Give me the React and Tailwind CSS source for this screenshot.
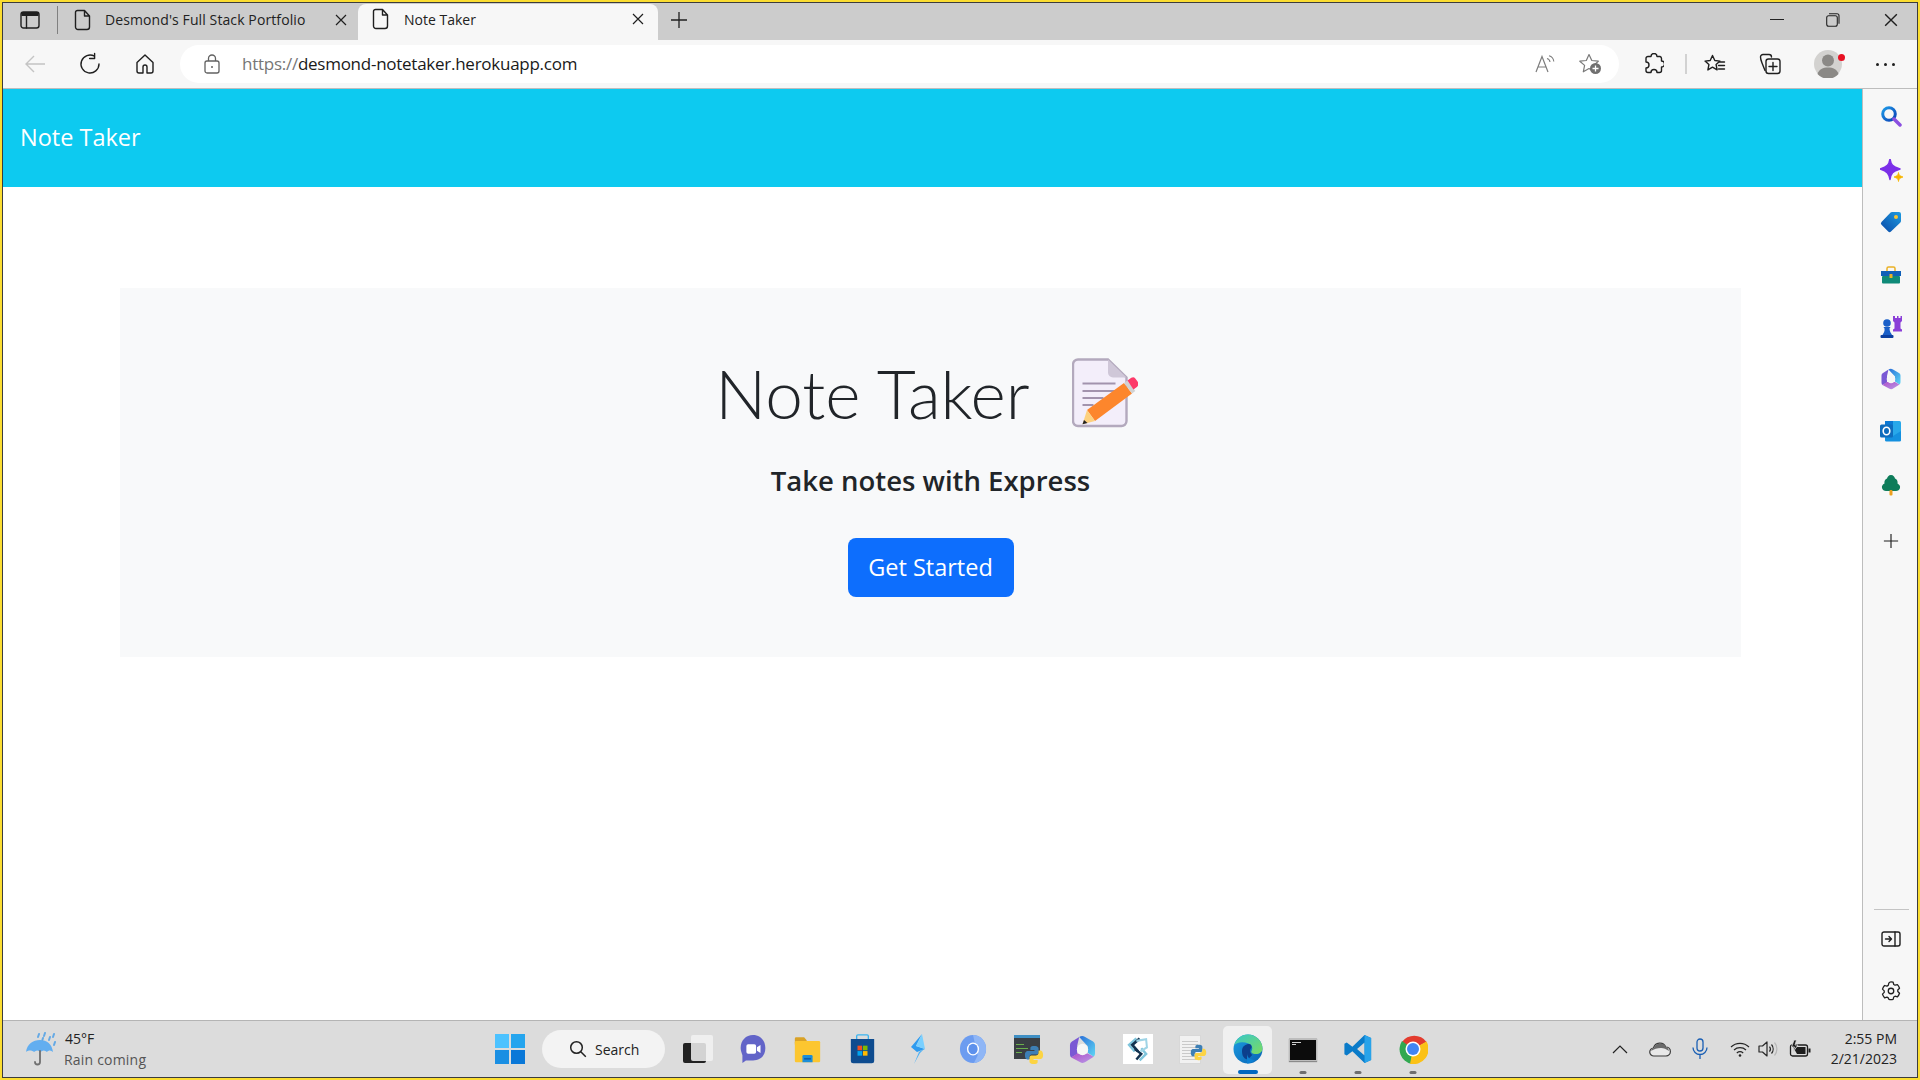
import React from "react";

const S = ({ w = 24, h = 24, vb = "0 0 24 24", children, className = "" }) => (
  <svg width={w} height={h} viewBox={vb} fill="none" className={className}>{children}</svg>
);
const Ln = { stroke: "#1f1f1f", strokeWidth: 1.4, strokeLinecap: "round", strokeLinejoin: "round" };

const Doc = () => (
  <S w={18} h={22} vb="0 0 18 22"><path d="M3.500 1.500h7l5 5.500v11a2.500 2.500 0 0 1-2.500 2.500H4A2.500 2.500 0 0 1 1.500 18V3.500a2 2 0 0 1 2-2zM10.500 1.500V7h5" {...Ln} /></S>
);
const X = ({ s = 12, c = "#1f1f1f" }) => (
  <S w={s} h={s} vb="0 0 12 12"><path d="M1 1l10 10M11 1L1 11" stroke={c} strokeWidth="1.2" /></S>
);
const TabsIcon = () => (
  <S w={20} h={20} vb="0 0 20 20"><rect x="1" y="2" width="18" height="16" rx="2.500" {...Ln} /><path d="M1.500 3.500a1.500 1.500 0 0 1 1.500-1.500h14a1.500 1.500 0 0 1 1.500 1.500V6h-17z" fill="#1f1f1f" /><path d="M6.500 6v12" {...Ln} /></S>
);
const Plus = ({ s = 18 }) => (
  <S w={s} h={s} vb="0 0 18 18"><path d="M9 1v16M1 9h16" stroke="#1f1f1f" strokeWidth="1.3" /></S>
);
const Back = () => (
  <S w={22} h={20} vb="0 0 22 20"><path d="M21 10H2M10 2l-8 8 8 8" stroke="#c4c4c4" strokeWidth="1.4" /></S>
);
const Reload = () => (
  <S w={22} h={24} vb="0 0 22 24"><path d="M15.500 4.200A9 9 0 1 0 20 12M15.600 1.500v5h-5" {...Ln} /></S>
);
const Home = () => (
  <S w={20} h={22} vb="0 0 20 22"><path d="M8 20H4a2 2 0 0 1-2-2V9.500L10 2l8 7.500V18a2 2 0 0 1-2 2h-4v-6a2 2 0 0 0-4 0z" {...Ln} /></S>
);
const Lock = () => (
  <S w={16} h={20} vb="0 0 16 20"><rect x="1" y="7" width="14" height="12" rx="2" stroke="#616161" strokeWidth="1.3" /><path d="M4.500 7V4.500a3.500 3.500 0 0 1 7 0V7" stroke="#616161" strokeWidth="1.3" /><circle cx="8" cy="13" r="1" fill="#616161" /></S>
);
const ReadAloud = () => (
  <S w={20} h={18} vb="0 0 20 18"><path d="M1 17L7 1.500 13 17M3 12h8" stroke="#7d7d7d" strokeWidth="1.200" /><path d="M12 3.500c1.700.5 2.800 1.800 3 3.500M14 .8c2.700.7 4.500 3 4.800 5.700" stroke="#7d7d7d" strokeWidth="1.100" /></S>
);
const FavAdd = () => (
  <S w={24} h={22} vb="0 0 24 22"><path d="M11 1.500l2.800 6 6.500.7-4.800 4.400 1.300 6.400L11 15.500 5.300 18.800l1.300-6.400L1.800 8.200l6.500-.7z" stroke="#7a7a7a" strokeWidth="1.2" strokeLinejoin="round" /><circle cx="17.500" cy="15.500" r="5.500" fill="#707070" /><path d="M17.500 12.500v6M14.500 15.500h6" stroke="#fff" strokeWidth="1.300" /></S>
);
const Puzzle = () => (
  <S w={20} h={22} vb="0 0 20 22"><path d="M7 3.500a3 3 0 0 1 6 0h3a2 2 0 0 1 1.500 2v2.500a3 3 0 0 1 0 6V17.500a2 2 0 0 1-2 2H13a3 3 0 0 0-6 0H4a2 2 0 0 1-2-2V15a3 3 0 0 0 0-6V5.500a2 2 0 0 1 2-2z" {...Ln} /></S>
);
const Favs = () => (
  <S w={22} h={20} vb="0 0 22 20"><path d="M8.500 1.500l2.300 5 5.200.6-3.900 3.500 1 5.300-4.600-2.700-4.600 2.700 1-5.300L1 7.100l5.200-.6z" {...Ln} /><path d="M15.500 8h5M14.500 11.500h6M14.500 15h6" {...Ln} /></S>
);
const Collections = () => (
  <S w={22} h={22} vb="0 0 22 22"><path d="M6 17.500L3 10C2 7.500 1.500 5.500 1.500 4A2.500 2.500 0 0 1 4 1.500h6A2.500 2.500 0 0 1 12.500 4" {...Ln} /><rect x="7" y="6" width="14" height="14.500" rx="2.500" {...Ln} /><path d="M14 9.500v8M10 13.500h8" {...Ln} /></S>
);
const Avatar = () => (
  <div className="relative w-[28px] h-[28px] rounded-full bg-[#d3d2d0]">
    <S w={28} h={28} vb="0 0 28 28"><circle cx="14" cy="10.500" r="6" fill="#8b8986" /><path d="M3.500 24c1.500-5 5.500-6.500 10.500-6.500S23 19 24.500 24a14 14 0 0 1-21 0z" fill="#8b8986" /></S>
    <span className="absolute -right-[3px] top-[4px] w-[7px] h-[7px] rounded-full bg-[#e81123]" />
  </div>
);
const Dots = () => (
  <div className="flex gap-[5px]">
    <span className="w-[3px] h-[3px] rounded-full bg-[#1f1f1f]" />
    <span className="w-[3px] h-[3px] rounded-full bg-[#1f1f1f]" />
    <span className="w-[3px] h-[3px] rounded-full bg-[#1f1f1f]" />
  </div>
);

/* sidebar icons */
const SearchC = () => (
  <S w={22} h={22} vb="0 0 22 22"><defs><linearGradient id="sg" x1="0" y1="0" x2="1" y2="1"><stop offset="0" stopColor="#1d9be8" /><stop offset="1" stopColor="#0b3fb5" /></linearGradient></defs><circle cx="9" cy="9" r="6.300" stroke="url(#sg)" strokeWidth="3" /><path d="M14 14l6 6" stroke="#8b4fe0" strokeWidth="3.500" strokeLinecap="round" /></S>
);
const Spark = () => (
  <S w={24} h={24} vb="0 0 24 24"><path d="M10 0c1 6 2.500 7.500 10 10-7.500 2.500-9 4-10 10.500C9 14.500 7.500 12.500 0 10c7.500-2.500 9-4 10-10z" fill="#7b2fe8" stroke="#7b2fe8" strokeWidth="1.500" strokeLinejoin="round" /><path d="M18.500 13.500c.4 2.500 1 3.200 4.500 4.500-3.500 1.300-4.100 2-4.500 4.500-.4-2.500-1-3.200-4.500-4.500 3.500-1.300 4.100-2 4.500-4.500z" fill="#f7b500" stroke="#f7b500" strokeWidth=".8" strokeLinejoin="round" /></S>
);
const Tag = () => (
  <S w={22} h={22} vb="0 0 22 22"><defs><linearGradient id="tg" x1="0" y1="1" x2="1" y2="0"><stop offset="0" stopColor="#0a49a8" /><stop offset="1" stopColor="#1e9be0" /></linearGradient></defs><path d="M12 1h7a2 2 0 0 1 2 2v7a2 2 0 0 1-.6 1.400L11 20.500a2 2 0 0 1-2.800 0L1.500 13.800a2 2 0 0 1 0-2.800L10.600 1.600A2 2 0 0 1 12 1z" fill="url(#tg)" /><circle cx="16" cy="6" r="2" fill="#f9c531" /></S>
);
const Case = () => (
  <S w={22} h={18} vb="0 0 22 18"><path d="M7 5V2.500A1.500 1.500 0 0 1 8.500 1h5A1.500 1.500 0 0 1 15 2.500V5" stroke="#eab126" strokeWidth="1.500" /><rect x="1" y="5" width="20" height="5" fill="#0f5fb8" /><rect x="2" y="10" width="18" height="7.500" rx="1" fill="#0f8a78" /><rect x="9.500" y="8" width="3" height="4" rx=".6" fill="#eab126" /></S>
);
const Chess = () => (
  <S w={24} h={24} vb="0 0 24 24"><path d="M14 1h2v2h2V1h1.500v2h2V1H23v5l-1.500 1.500v6l1.500 1v2h-9v-2l1.500-1v-6L14 6z" fill="#8b3fd8" /><circle cx="8" cy="8" r="3.800" fill="#1a5fc8" /><path d="M4.500 12h7l-1 1.500c0 3 1.500 4.500 2.500 6.500H3.500c1-2 2.500-3.500 2-6.500z" fill="#1a5fc8" /><rect x="1.500" y="20" width="13" height="3" rx="1" fill="#0c3fa0" /></S>
);
const M365 = ({ s = 22, id = "a" }) => (
  <S w={s} h={s} vb="0 0 22 22">
    <defs>
      <linearGradient id={`mb${id}`} x1="0" y1="0" x2="1" y2="1"><stop offset="0" stopColor="#2a6fd8" /><stop offset="1" stopColor="#5fd6f5" /></linearGradient>
      <linearGradient id={`mp${id}`} x1="0" y1="0" x2="1" y2="1"><stop offset="0" stopColor="#b04fc8" /><stop offset="1" stopColor="#b79be8" /></linearGradient>
    </defs>
    <path d="M8.500 1.500a4 4 0 0 1 4.500 0l6 3.500a3 3 0 0 1 1.500 2.700v6.600a3 3 0 0 1-1 2.200L15 13.500V8.500z" fill={`url(#mb${id})`} />
    <path d="M1.500 7.500a3 3 0 0 1 1.500-2.600L8.500 1.500 7 8v6.500L2.500 17a3 3 0 0 1-1-2.300z" fill="#7a58d4" />
    <path d="M2.500 17L7 14l8 0 4.500 2.500-6 3.800a4 4 0 0 1-4.500.2z" fill={`url(#mp${id})`} />
    <circle cx="11" cy="11" r="4.300" fill="#f6f6f6" />
  </S>
);
const Outlook = () => (
  <S w={22} h={22} vb="0 0 22 22"><rect x="5" y="1" width="16" height="20" rx="1.500" fill="#28a8ea" /><rect x="5" y="1" width="8" height="7" fill="#0a78d4" /><path d="M5 11l8 5 8-5v9a1.500 1.500 0 0 1-1.500 1.500h-13A1.500 1.500 0 0 1 5 20z" fill="#1490df" /><rect x="0" y="4.500" width="13" height="13" rx="1.500" fill="#0f6cbd" /><ellipse cx="6.500" cy="11" rx="3.300" ry="3.800" stroke="#fff" strokeWidth="1.600" /></S>
);
const Tree = () => (
  <S w={20} h={22} vb="0 0 20 22"><path d="M10 1c2.500 0 3.500 2 4 3.500 2 .5 3 3 2.500 5 2 1 3 3 2.500 4.500-.5 2-2 3-4 3H5c-2 0-3.500-1-4-3-.4-2 .5-3.500 2.500-4.500C3 7.500 4 5 6 4.500 6.500 3 7.500 1 10 1z" fill="#0e7c5a" /><rect x="8.500" y="16" width="3" height="5.500" rx="1" fill="#eda01e" /></S>
);
const Dock = () => (
  <S w={20} h={16} vb="0 0 20 16"><rect x="1" y="1" width="18" height="14" rx="2" {...Ln} /><path d="M14 1v14M4.500 8h6M8 5.500L10.500 8 8 10.500" {...Ln} /></S>
);
const Gear = () => (
  <S w={22} h={22} vb="0 0 24 24"><circle cx="12" cy="12" r="3" {...Ln} /><path d="M12 2c.8 0 1.600.1 2.300.3l.7 2.600 1.400.8 2.600-.7c1 1.100 1.800 2.500 2.300 4l-1.900 1.900v1.600l1.900 1.900c-.5 1.500-1.300 2.900-2.300 4l-2.600-.7-1.400.8-.7 2.600a10 10 0 0 1-4.600 0L9 19.500l-1.400-.8-2.600.7a10 10 0 0 1-2.300-4l1.900-1.900v-1.600L2.700 10c.5-1.500 1.300-2.900 2.300-4l2.600.7L9 5.900l.7-2.600C10.400 2.100 11.200 2 12 2z" {...Ln} /></S>
);

/* hero illustration */
const NoteIcon = () => (
  <S w={66} h={70} vb="0 0 66 70">
    <path d="M6 1.500h30l18.500 18V63a5 5 0 0 1-5 5H6a5 5 0 0 1-5-5V6.500a5 5 0 0 1 5-5z" fill="#f3eefa" stroke="#b3a9bd" strokeWidth="2.400" />
    <path d="M36 1.500l18.500 18H41a5 5 0 0 1-5-5z" fill="#cfc7d8" />
    <path d="M10.500 25.500h33M10.500 33h33M10.500 40h21M10.500 47h11" stroke="#a293ad" strokeWidth="2.200" />
    <path d="M15 52L52 25l8 10.500L23 63z" fill="#fd862c" />
    <path d="M15 52l8 11-12.500 3.300z" fill="#fdd17e" />
    <path d="M12 62l-1.500 4.300 5-1.300z" fill="#222" />
    <path d="M52 25l3.300-2.400 8 10.500L60 35.500z" fill="#d2d2d2" />
    <path d="M55.500 22.500l3.800-2.700a3 3 0 0 1 4 .6l1.500 2.100 .6.800 .4.600a4 4 0 0 1-.9 5l-3.500 2.600z" fill="#fd3a69" />
  </S>
);

/* taskbar */
const Umbrella = () => (
  <S w={32} h={34} vb="0 0 32 34">
    <path d="M1 20C2 12 8 8 15 8s12 4 13 12c-2-2-4.500-2-6 0-2-2-4.500-2-6.500 0-2-2-4.500-2-6.500 0-2-2-6-2-8 0z" fill="#62aef0" />
    <path d="M15 19v11a2.500 2.500 0 0 1-5 0" stroke="#6f6f6f" strokeWidth="1.800" strokeLinecap="round" />
    <path d="M14 2l-1 3M20 1l-1 3M25 5l-1 3M29 2l-1 3M30 10l-1 3M18 6l-.6 2" stroke="#64a9e5" strokeWidth="2" strokeLinecap="round" />
  </S>
);
const Win = () => (
  <div className="grid grid-cols-2 gap-[1.500px] w-[30px] h-[30px]">
    <span className="bg-[#4cc2ff]" /><span className="bg-[#25a5ee]" /><span className="bg-[#1a8fe3]" /><span className="bg-[#0a78d8]" />
  </div>
);
const TaskView = () => (
  <div className="relative w-[30px] h-[28px]">
    <span className="absolute left-0 bottom-0 w-[23px] h-[20px] rounded-[2px] bg-[#222]" />
    <span className="absolute right-0 top-0 w-[22px] h-[26px] rounded-[2px] bg-[#f2f2f2]/85" />
  </div>
);
const Teams = () => (
  <S w={30} h={30} vb="0 0 30 34"><path d="M15 1c8 0 14 6 14 15s-6 14-14 14H7l-4 3v-9C2 21 1 19 1 16 1 7 7 1 15 1z" fill="#6264c8" /><rect x="7.500" y="11.500" width="11" height="11" rx="2" fill="#fff" /><path d="M19.500 15l4-2.500v9l-4-2.500z" fill="#fff" /></S>
);
const Folder = () => (
  <S w={31} h={27} vb="0 0 32 32"><path d="M1 3a1.500 1.500 0 0 1 1.500-1.500H12l3 3.500v5H1z" fill="#d9a227" /><rect x="1" y="6" width="30" height="25" rx="1.500" fill="#fcc630" /><path d="M10 31v-7a1.500 1.500 0 0 1 1.500-1.500h9A1.500 1.500 0 0 1 22 24v7z" fill="#1d8ed8" /><rect x="12" y="26" width="8" height="2" fill="#0b5cad" /></S>
);
const Store = () => (
  <S w={29} h={30} vb="0 0 30 36"><path d="M8 8V2.500A1.500 1.500 0 0 1 9.500 1h11A1.500 1.500 0 0 1 22 2.500V8" stroke="#3ab4f0" strokeWidth="1.600" /><path d="M1 6h28v26a3 3 0 0 1-3 3H4a3 3 0 0 1-3-3z" fill="#0e4c8f" /><rect x="9" y="14" width="5.500" height="5.500" fill="#f25022" /><rect x="15.500" y="14" width="5.500" height="5.500" fill="#7fba00" /><rect x="9" y="20.500" width="5.500" height="5.500" fill="#00a4ef" /><rect x="15.500" y="20.500" width="5.500" height="5.500" fill="#ffb900" /></S>
);
const Bolt = () => (
  <S w={16} h={30} vb="0 0 16 30"><path d="M12 0L1 13l6 5 8-3-9-3z" fill="#2e9bf0" /><path d="M15 14l-5 5-6 11 5-12z" fill="#4db0f5" /><path d="M12 0L6 12l9 3z" fill="#7ad0ff" /></S>
);
const Chromium = () => (
  <S w={28} h={28} vb="0 0 30 30"><ellipse cx="15" cy="15" rx="14" ry="15" fill="#6c9cf0" /><path d="M15 0c8 0 14 6.500 14 15 0 8-6 15-13 15l4-8z" fill="#8fb6f6" /><ellipse cx="15" cy="15" rx="6.500" ry="7" fill="#fff" /><ellipse cx="15" cy="15" rx="5" ry="5.500" fill="#5d91ec" /></S>
);
const Py = ({ s = 22 }) => (
  <S w={s} h={s} vb="0 0 22 22"><path d="M11 1C7 1 7 3 7 3v2.500h4.500v1H4.500S1 6 1 11s3 5 3 5h2v-2.500S6 10.500 9 10.500h4.500s2.500 0 2.500-2.500V3.500S16 1 11 1z" fill="#3d7fb5" /><path d="M11 21c4 0 4-2 4-2v-2.500h-4.500v-1h7s3.500.5 3.500-4.500-3-5-3-5h-2v2.500s0 3-3 3H8.500S6 11.500 6 14v4.500S6 21 11 21z" fill="#fcd443" /></S>
);
const PyEditor = () => (
  <div className="relative w-[28px] h-[28px]">
    <div className="w-[26px] h-[24px] bg-[#3a3f44] border-t-[3px] border-[#3f8fc4]">
      <div className="w-[8px] h-[1px] bg-[#6ab04c] mt-[6px] ml-[2px]" />
      <div className="w-[12px] h-[1px] bg-[#6ab04c] mt-[3px] ml-[2px]" />
      <div className="w-[6px] h-[1px] bg-[#6ab04c] mt-[3px] ml-[2px]" />
    </div>
    <div className="absolute right-[-2px] bottom-[-2px]"><Py s={20} /></div>
  </div>
);
const Chain = () => (
  <div className="w-[30px] h-[30px] bg-white flex items-center justify-center">
    <S w={26} h={26} vb="0 0 28 32"><path d="M12 3L3 11l7 8M16 30l8-8-6-7" stroke="#7fc5dc" strokeWidth="3" /><path d="M16 3l-9 8 7 8" stroke="#12324f" strokeWidth="3.300" /><path d="M10 16l8 6-6 7" stroke="#12324f" strokeWidth="3" /><path d="M12 6l12-2 1 10-8 5" stroke="#9fd4e6" strokeWidth="2.500" /></S>
  </div>
);
const PyFile = () => (
  <div className="relative w-[28px] h-[29px]">
    <div className="w-[22px] h-[29px] bg-[#f1f1f1] border border-[#d8d8d8] flex flex-col gap-[2px] pt-[5px] px-[2px]">
      <span className="h-[1px] bg-[#c9c9c9]" /><span className="h-[1px] bg-[#c9c9c9]" /><span className="h-[1px] bg-[#c9c9c9]" /><span className="h-[1px] bg-[#c9c9c9]" /><span className="h-[1px] bg-[#c9c9c9]" /><span className="h-[1px] bg-[#c9c9c9]" /><span className="h-[1px] bg-[#c9c9c9]" />
    </div>
    <div className="absolute right-0 top-[9px]"><Py s={17} /></div>
  </div>
);
const Edge = () => (
  <S w={30} h={30} vb="0 0 30 30"><defs><linearGradient id="e1" x1="0" y1="0" x2="1" y2="1"><stop offset="0" stopColor="#36c7c9" /><stop offset="1" stopColor="#7bdc62" /></linearGradient><linearGradient id="e2" x1="0" y1="0" x2="1" y2="1"><stop offset="0" stopColor="#1b9de2" /><stop offset="1" stopColor="#0a63b4" /></linearGradient></defs><circle cx="15" cy="15" r="14.500" fill="url(#e2)" /><path d="M1 12C3 5 8 .5 15 .5c8 0 14.500 6.500 14.500 14 0 3.500-3 5.500-6.500 5.500-3.500 0-5.500-1.500-4.500-3 1.500-2.500 1-6-3-7.500C10 7.500 3 8 1 12z" fill="url(#e1)" /><path d="M9 17c0-5 4-7 7-7 2 0 3 2 2.500 4-2 1-2 5 1 7-1 0-2 2.500-5 4.500-4-1-5.500-4-5.500-8.500z" fill="#0c3f8c" /><path d="M14 19c0 5 4 7 8 7-2 2-5 3.500-8 3.500" fill="#0d7fd2" /></S>
);
const Terminal = () => (
  <div className="w-[28px] h-[23px] bg-[#0c0c0c] border-[1px] border-[#bdbdbd] border-t-[2px] pl-[2px] pt-[2px] shadow-[0_1px_1px_#8a8a8a]">
    <div className="w-[9px] h-[1px] bg-[#cfcfcf]" />
    <div className="w-[4px] h-[1px] bg-[#cfcfcf] mt-[1px]" />
  </div>
);
const VSCode = () => (
  <S w={30} h={30} vb="0 0 30 32"><path d="M22 1l7 3.300v23.400L22 31 9 18.500 3 23l-2.500-1.500V10.500L3 9l6 4.500z" fill="#0a7bc9" /><path d="M22 9l-8 7 8 7z" fill="#d8d8d8" /><path d="M22 1l7 3.300v23.400L22 31z" fill="#28a3ea" /></S>
);
const Chrome = () => (
  <S w={30} h={30} vb="0 0 30 30"><path d="M15 15L4 8A15 15 0 0 1 28.500 8z" fill="#e33b2e" /><path d="M15 15L4 7A15 15 0 0 0 13 29.800z" fill="#31a851" /><path d="M15 15l13.500-7.500A15 15 0 0 1 12 29.700z" fill="#fbc116" /><circle cx="15" cy="15" r="7.500" fill="#fff" /><circle cx="15" cy="15" r="6" fill="#4285f4" /></S>
);

const Cloud = () => (
  <S w={22} h={16} vb="0 0 22 16"><path d="M5 15a4 4 0 0 1-.5-8 6.500 6.500 0 0 1 12.300-1A4.500 4.500 0 0 1 17 15z" fill="#e8e8e8" stroke="#3a3a3a" strokeWidth="1.200" /><path d="M2 10a4 4 0 0 1 3-3 6.500 6.500 0 0 1 12-1 4.500 4.500 0 0 1 3 4c-3-2-5-3-8-3-4 0-7 1-10 3z" fill="#6a6a6a" /></S>
);
const Mic = () => (
  <S w={16} h={22} vb="0 0 16 22"><rect x="5" y="1" width="6" height="12" rx="3" stroke="#1a5fb4" strokeWidth="1.300" /><path d="M1 9.500a7 7 0 0 0 14 0M8 16.500V21" stroke="#1a5fb4" strokeWidth="1.300" /></S>
);
const Wifi = () => (
  <S w={20} h={16} vb="0 0 20 16"><path d="M1 6a13 13 0 0 1 18 0M4 9a9 9 0 0 1 12 0M6.800 12a5 5 0 0 1 6.400 0" stroke="#262626" strokeWidth="1.200" /><circle cx="10" cy="14.500" r="1.300" fill="#262626" /></S>
);
const Speaker = () => (
  <S w={20} h={18} vb="0 0 20 18" className="shrink-0"><path d="M1 6h3.500L9 2v14l-4.500-4H1z" stroke="#262626" strokeWidth="1.200" strokeLinejoin="round" /><path d="M11.500 6.500a4 4 0 0 1 0 5M13.500 4.500a7 7 0 0 1 0 9" stroke="#262626" strokeWidth="1.200" /><path d="M16.500 2.500a10 10 0 0 1 0 13" stroke="#b8b8b8" strokeWidth="1.200" /></S>
);
const Battery = () => (
  <S w={22} h={18} vb="0 0 22 18"><rect x="1.500" y="5" width="17" height="11" rx="2" stroke="#1d1d1d" strokeWidth="1.300" /><rect x="19.500" y="8.500" width="2" height="4" fill="#1d1d1d" /><path d="M4 7h12.500v7H8z" fill="#1d1d1d" /><path d="M5 0L2.500 7h3L4 12l5-7H6l1.500-5z" fill="#1d1d1d" stroke="#dcdcdc" strokeWidth=".8" /></S>
);

const Slot = ({ w, children, className = "" }) => (
  <div className={`shrink-0 flex items-center justify-center ${className}`} style={{ width: w }}>{children}</div>
);
const Pip = () => <span className="absolute left-1/2 -translate-x-1/2 bottom-[3px] w-[7px] h-[3px] rounded-full bg-[#6e6e6e]" />;

const font = "font-['Open_Sans','Noto_Sans',sans-serif]";

export default function App() {
  const apps = [
    [<TaskView />, 0], [<Teams />, 0], [<Folder />, 0], [<Store />, 0], [<Bolt />, 0], [<Chromium />, 0],
    [<PyEditor />, 0], [<M365 s={29} id="b" />, 0], [<Chain />, 0], [<PyFile />, 0], [<Edge />, 2], [<Terminal />, 1], [<VSCode />, 1], [<Chrome />, 1],
  ];
  const side = [
    [<SearchC />, "h-[54px]"], [<Spark />, "h-[52px] pt-[4px] pl-[2px]"], [<Tag />, "h-[52px] pt-[1px]"], [<Case />, "h-[56px]"], [<Chess />, "h-[48px]"],
    [<M365 />, "h-[56px]"], [<Outlook />, "h-[48px]"], [<Tree />, "h-[56px] pt-[3px]"], [<Plus s={16} />, "h-[60px]"],
  ];
  return (
    <div className={`w-[1920px] h-[1080px] overflow-hidden p-[2px] bg-[#fbdd31] ${font}`}>
      <div className="w-full h-full flex flex-col bg-white border border-[#3c3c3c]">
        {/* tab strip */}
        <div className="h-[37px] shrink-0 bg-[#cccccc] flex items-start">
          <Slot w={54} className="h-[33px]"><TabsIcon /></Slot>
          <div className="w-[1px] h-[28px] bg-[#808080] mt-[3px]" />
          <div className="h-[33px] w-[300px] flex items-center text-[14px] text-[#222] tracking-[0.1px]">
            <Slot w={48} className="pl-[1px]"><Doc /></Slot>
            <span className="whitespace-nowrap w-[230px] ml-[-1px]">Desmond's Full Stack Portfolio</span>
            <X />
          </div>
          <div className="h-[36px] mt-[1px] w-[300px] pb-[6px] bg-[#f7f7f7] rounded-t-[8px] flex items-center text-[14px] text-[#222]">
            <Slot w={46}><Doc /></Slot>
            <span className="whitespace-nowrap w-[228px]">Note Taker</span>
            <X />
          </div>
          <Slot w={42} className="h-[33px]"><Plus /></Slot>
          <div className="flex-1" />
          <Slot w={48} className="h-[33px]"><span className="w-[14px] h-[1px] bg-[#222]" /></Slot>
          <Slot w={64} className="h-[33px]"><S w={14} h={14} vb="0 0 14 14"><rect x=".7" y="2.700" width="10.600" height="10.600" rx="2" stroke="#222" strokeWidth="1.100" /><path d="M3 .7h8a2 2 0 0 1 2 2v8" stroke="#222" strokeWidth="1.100" /></S></Slot>
          <Slot w={52} className="h-[33px]"><X s={14} /></Slot>
        </div>
        {/* toolbar */}
        <div className="h-[49px] shrink-0 bg-[#f7f7f7] flex items-center border-b border-[#bdbdbd]">
          <Slot w={64}><Back /></Slot>
          <Slot w={46}><Reload /></Slot>
          <Slot w={64}><Home /></Slot>
          <div className="w-[1439px] h-[38px] ml-[3px] rounded-full bg-white flex items-center text-[17px]">
            <Slot w={62} className="pl-[2px]"><Lock /></Slot>
            <span className="whitespace-nowrap tracking-[-0.26px] text-[#1a1a1a]"><span className="text-[#767676]">https://</span>desmond-notetaker.herokuapp.com</span>
            <div className="flex-1" />
            <Slot w={44}><ReadAloud /></Slot>
            <Slot w={46} className="mr-[6px]"><FavAdd /></Slot>
          </div>
          <Slot w={63} className="ml-[3px]"><Puzzle /></Slot>
          <div className="w-[2px] h-[20px] bg-[#d2d2d2]" />
          <Slot w={56}><Favs /></Slot>
          <Slot w={54}><Collections /></Slot>
          <Slot w={62}><Avatar /></Slot>
          <Slot w={52}><Dots /></Slot>
        </div>
        {/* middle */}
        <div className="flex-1 min-h-0 flex">
          <main className="flex-1 min-w-0 flex flex-col">
            <header className="h-[98px] shrink-0 bg-[#0dcaf0] flex items-center pl-[17px] text-white text-[23.500px]">Note Taker</header>
            <div className="flex-1 pl-[117px] pr-[121px] pt-[101px]">
              <section className="h-[369px] bg-[#f8f9fa] flex flex-col items-center text-[#212529]">
                <div className="flex items-start mt-[70px] h-[84px] pr-[8px]">
                  <h1 className="font-['Lato','Open_Sans',sans-serif] text-[67.500px] font-light leading-[70px] whitespace-nowrap mr-[42px]">Note Taker</h1>
                  <NoteIcon />
                </div>
                <p className="mt-[21px] text-[27.500px] font-semibold leading-[36px]">Take notes with Express</p>
                <button className="mt-[39px] w-[166px] h-[59px] rounded-[8px] bg-[#0d6efd] text-white text-[23.500px]">Get Started</button>
              </section>
            </div>
          </main>
          <aside className="w-[55px] shrink-0 bg-[#f7f7f7] border-l border-[#bdbdbd] flex flex-col items-center pl-[2px]">
            {side.map(([ic, h], i) => (
              <div key={i} className={`w-full flex items-center justify-center ${h}`}>{ic}</div>
            ))}
            <div className="flex-1" />
            <div className="w-[35px] h-[1px] bg-[#c4c4c4]" />
            <div className="h-[58px] flex items-center"><Dock /></div>
            <div className="h-[46px] mb-[6px] flex items-center"><Gear /></div>
          </aside>
        </div>
        {/* taskbar */}
        <div className="h-[57px] shrink-0 bg-[#dcdcdc] border-t border-[#b4b4b4] flex items-center">
          <Slot w={60} className="pl-[16px]"><Umbrella /></Slot>
          <div className="w-[429px] ml-[2px] text-[14px] leading-[21px] text-[#222]">
            <div>45°F</div>
            <div className="text-[#555] tracking-[0.2px] -ml-[1px]">Rain coming</div>
          </div>
          <Slot w={30} className="ml-[1px]"><Win /></Slot>
          <div className="w-[123px] h-[38px] ml-[17px] mr-[5px] rounded-full bg-[#f3f3f3] flex items-center pl-[27px] gap-[8px] text-[14px] text-[#222]">
            <S w={18} h={18} vb="0 0 18 18"><circle cx="7.500" cy="7.500" r="5.800" stroke="#222" strokeWidth="1.500" /><path d="M11.800 11.800l5 5" stroke="#222" strokeWidth="1.500" /></S>
            Search
          </div>
          <div className="flex h-[56px]">
            {apps.map(([ic, state], i) => (
              <div key={i} className="relative w-[55px] h-full flex items-center justify-center">
                {state === 2 && <span className="absolute left-[3px] top-[5px] w-[49px] h-[48px] rounded-[5px] bg-[#f0f0f0]" />}
                <div className="relative">{ic}</div>
                {state === 2 && <span className="absolute left-[18px] bottom-[3px] w-[20px] h-[4px] rounded-full bg-[#0067c0]" />}
                {state === 1 && <Pip />}
              </div>
            ))}
          </div>
          <div className="flex-1" />
          <Slot w={40}><S w={16} h={9} vb="0 0 16 9"><path d="M1 8l7-7 7 7" stroke="#222" strokeWidth="1.200" /></S></Slot>
          <Slot w={40}><Cloud /></Slot>
          <Slot w={40}><Mic /></Slot>
          <Slot w={40}><Wifi /></Slot>
          <Slot w={16}><Speaker /></Slot>
          <Slot w={48}><Battery /></Slot>
          <div className="w-[73px] mr-[20px] text-right text-[14px] leading-[20px] text-[#222] whitespace-nowrap">
            <div>2:55 PM</div>
            <div>2/21/2023</div>
          </div>
        </div>
      </div>
    </div>
  );
}
